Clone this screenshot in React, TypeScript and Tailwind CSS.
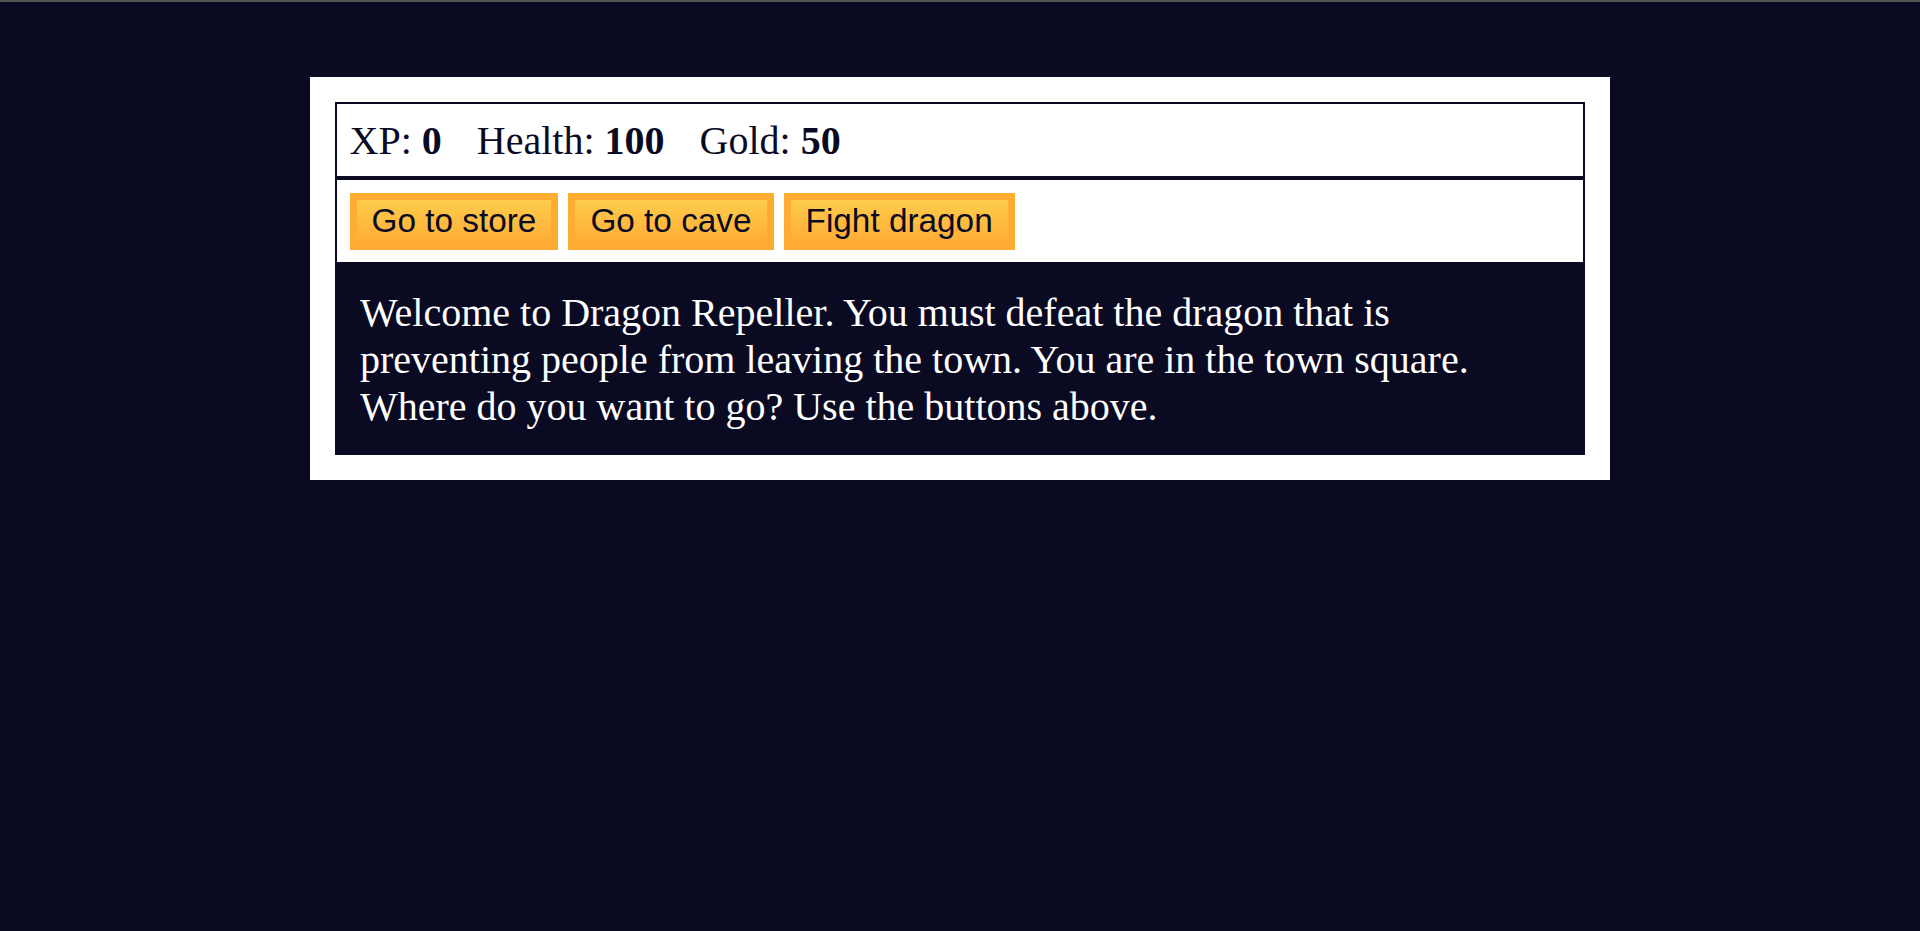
const stats = [
  { label: "XP", value: 0 },
  { label: "Health", value: 100 },
  { label: "Gold", value: 50 },
];

const actions = ["Go to store", "Go to cave", "Fight dragon"];

const App = () => {
  return (
    <div className="min-h-screen bg-[#0a0a23] font-['Liberation_Serif',serif]">
      <div className="h-[2px] bg-[#555555]" />
      <div className="mx-auto mt-[75px] w-[1300px] bg-white p-[25px] text-white">
        <div className="border-2 border-[#0a0a23] p-[12.5px] text-[40px] leading-[normal] text-[#0a0a23]">
          {stats.map((stat) => (
            <span key={stat.label}>
              <span className="pr-[25px]">
                {stat.label}: <strong>{stat.value}</strong>
              </span>{" "}
            </span>
          ))}
        </div>
        <div className="border-2 border-[#0a0a23] p-[12.5px] text-[40px] leading-[normal]">
          {actions.map((action) => (
            <span key={action}>
              <button className="cursor-pointer border-[7px] border-[#feac32] bg-[#feac32] bg-linear-to-b from-[#fecc4c] to-[#ffac33] px-[15px] py-[2.5px] align-baseline font-['Liberation_Sans',Arial,sans-serif] text-[33.33px] leading-[normal] text-[#0a0a23]">
                {action}
              </button>{" "}
            </span>
          ))}
        </div>
        <div className="bg-[#0a0a23] p-[25px] text-[40px] leading-[normal] text-white">
          Welcome to Dragon Repeller. You must defeat the dragon that is preventing people from
          leaving the town. You are in the town square. Where do you want to go? Use the buttons
          above.
        </div>
      </div>
    </div>
  );
};

export default App;
